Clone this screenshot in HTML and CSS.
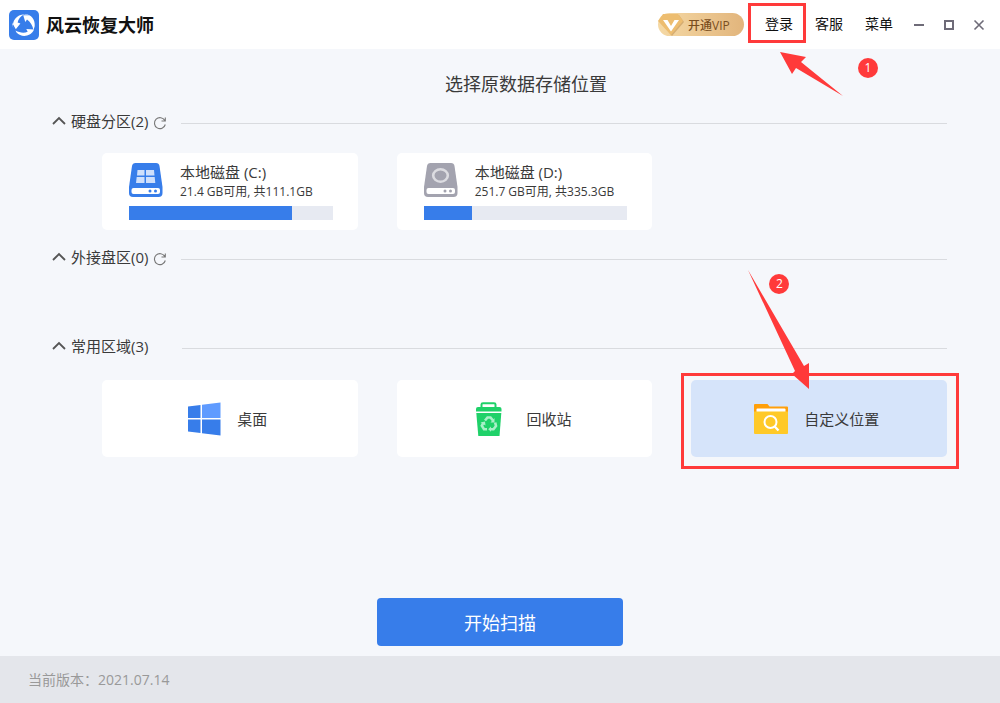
FILE: index.html
```html
<!DOCTYPE html>
<html lang="zh-CN">
<head>
<meta charset="utf-8">
<meta name="viewport" content="width=device-width, initial-scale=1">
<title>风云恢复大师</title>
<link rel="stylesheet" href="styles.css">
</head>
<body>
<header class="topbar">
  <svg class="logo" viewBox="0 0 30 30" aria-hidden="true">
    <rect width="30" height="30" rx="5" fill="#377dea"/>
    <g fill="#fff">
      <path d="M4.300 18.500C2.500 11 7.500 4.600 15.500 4.200C11.500 6 9.300 8.800 8.600 12.600L11.400 13.600L6.800 19.200L3 12.500Z"/>
      <path d="M15 4.500C21 3.300 26.500 9 25.700 16.200L24.500 20C23.500 15.500 21.500 12 18 9.500L16.300 12L14.200 5.300L21.500 5.200Z"/>
      <path d="M24.500 20.500C21.500 26.500 12.500 28 7.500 22.500L6.500 20.500C10.500 22.800 15 23.300 18.700 21.800L17.300 19L25 19.600L22 26.200Z"/>
    </g>
  </svg>
  <h1 class="brand">风云恢复大师</h1>
  <button class="vip" type="button">
    <svg class="vip-gem" viewBox="0 0 26 24" aria-hidden="true">
      <path d="M6 1H20L25 8L13 22L1 8Z" fill="#b98a4c" opacity=".5" transform="translate(1 1)"/>
      <path d="M5 1H20L25 8L13 22L0 8Z" fill="#edbd70"/>
      <path d="M5 7H9.500L13 13L16.500 7H21L13 18.500Z" fill="#fff"/>
    </svg>
    开通VIP
  </button>
  <div class="login">
    <button class="nav-item" type="button">登录</button>
    <span class="login-frame"></span>
    <svg class="login-arrow" viewBox="0 0 64 45" aria-hidden="true"><path d="M0 0L26 5L21 10L63 44L16 16L12 22Z" fill="#ff3a3a"/></svg>
    <span class="step step-one">1</span>
  </div>
  <button class="nav-item" type="button">客服</button>
  <button class="nav-item" type="button">菜单</button>
  <div class="window-controls">
    <button class="win" type="button" aria-label="最小化"><svg viewBox="0 0 12 12"><path d="M1 6H11" stroke="#6e6b78" stroke-width="2"/></svg></button>
    <button class="win" type="button" aria-label="最大化"><svg viewBox="0 0 12 12"><rect x="2" y="2" width="8" height="8" fill="none" stroke="#6e6b78" stroke-width="2"/></svg></button>
    <button class="win" type="button" aria-label="关闭"><svg viewBox="0 0 12 12"><path d="M1.500 1.500L10.500 10.500M10.500 1.500L1.500 10.500" stroke="#6e6b78" stroke-width="1.600"/></svg></button>
  </div>
</header>

<main class="content">
  <h2 class="title">选择原数据存储位置</h2>

  <section>
    <div class="section-head">
      <button class="toggle" type="button"><svg class="chevron" viewBox="0 0 14 10" aria-hidden="true"><path d="M1 8L7 2L13 8" fill="none" stroke="#555" stroke-width="1.800"/></svg>硬盘分区(2)</button>
      <button class="refresh" type="button" aria-label="刷新"><svg viewBox="0 0 14 14"><path d="M11.800 4.500A5.500 5.500 0 1 0 12.300 8.500M12.300 1.500V5H8.500" fill="none" stroke="#777" stroke-width="1.100"/></svg></button>
      <span class="rule"></span>
    </div>
    <div class="cards disks">
      <button class="card disk" type="button">
        <svg class="disk-icon" viewBox="0 0 34 34" aria-hidden="true">
          <path d="M6.500 0H27Q30 0 30.500 3L33.500 24V30Q33.500 34 29.500 34H4Q0 34 0 30V24L3 3Q3.500 0 6.500 0Z" fill="#377dea"/>
          <path d="M8.500 7H15.500V12.500H8ZM17 7H25L25.500 12.500H17ZM7.700 14H15.500V20H7ZM17 14H25.700L26.300 20H17Z" fill="#cfdffb"/>
          <rect x="2.500" y="25" width="28.500" height="6" rx="2" fill="#fff"/>
          <circle cx="21" cy="28" r="1.500" fill="#377dea"/><circle cx="26.500" cy="28" r="1.500" fill="#377dea"/>
        </svg>
        <span class="disk-info"><span class="disk-name">本地磁盘 (C:)</span><span class="disk-size">21.4 GB可用, 共111.1GB</span></span>
        <span class="usage"><span class="used" style="width:80%"></span></span>
      </button>
      <button class="card disk" type="button">
        <svg class="disk-icon" viewBox="0 0 34 34" aria-hidden="true">
          <path d="M6.500 0H27Q30 0 30.500 3L33.500 24V30Q33.500 34 29.500 34H4Q0 34 0 30V24L3 3Q3.500 0 6.500 0Z" fill="#a3a3af"/>
          <ellipse cx="16.500" cy="12.500" rx="7.300" ry="6.200" fill="none" stroke="#dcdce1" stroke-width="2.600"/>
          <rect x="2.500" y="25" width="28.500" height="6" rx="2" fill="#fff"/>
          <circle cx="21" cy="28" r="1.500" fill="#a3a3af"/><circle cx="26.500" cy="28" r="1.500" fill="#a3a3af"/>
        </svg>
        <span class="disk-info"><span class="disk-name">本地磁盘 (D:)</span><span class="disk-size">251.7 GB可用, 共335.3GB</span></span>
        <span class="usage"><span class="used" style="width:23.600%"></span></span>
      </button>
    </div>
  </section>

  <section class="external">
    <div class="section-head">
      <button class="toggle" type="button"><svg class="chevron" viewBox="0 0 14 10" aria-hidden="true"><path d="M1 8L7 2L13 8" fill="none" stroke="#555" stroke-width="1.800"/></svg>外接盘区(0)</button>
      <button class="refresh" type="button" aria-label="刷新"><svg viewBox="0 0 14 14"><path d="M11.800 4.500A5.500 5.500 0 1 0 12.300 8.500M12.300 1.500V5H8.500" fill="none" stroke="#777" stroke-width="1.100"/></svg></button>
      <span class="rule"></span>
    </div>
  </section>

  <section>
    <div class="section-head">
      <button class="toggle" type="button"><svg class="chevron" viewBox="0 0 14 10" aria-hidden="true"><path d="M1 8L7 2L13 8" fill="none" stroke="#555" stroke-width="1.800"/></svg>常用区域(3)</button>
      <span class="rule rule-wide"></span>
    </div>
    <div class="cards">
      <button class="card place" type="button">
        <svg class="place-icon" viewBox="0 0 34 34" aria-hidden="true">
          <path d="M1 4.500L13.500 3V16H1ZM1 17.500H13.500V31L1 29.500ZM15 17.500H33.500V33.500L15 31.200Z" fill="#377dea"/>
          <path d="M15 2.800L33.500 .5V16H15Z" fill="#5f9bff"/>
        </svg>
        桌面
      </button>
      <button class="card place place-bin" type="button">
        <svg class="place-icon" viewBox="0 0 34 34" aria-hidden="true">
          <path d="M9.500 5V2.500Q9.500 1.200 11 1.200H22Q23.500 1.200 23.500 2.500V5" fill="none" stroke="#1fd169" stroke-width="2"/>
          <path d="M4 9.500V7Q4 5 6 5H27.500Q29.500 5 29.500 7V9.500Z" fill="#1fd169"/>
          <path d="M4.300 11H29.300L27.500 34H6.300Z" fill="#1fd169"/>
          <g fill="none" stroke="#a9f0c8" stroke-width="2.600">
            <path d="M13 18.500L15.500 15.500H18.500L21 18.500"/>
            <path d="M23.200 20.500L24 24L21.500 27.200H18.500"/>
            <path d="M15 27.200H12L9.800 23.800L11.500 20.500"/>
          </g>
          <path d="M22.500 16V20.500H18.500ZM19 24.500V29.700L16.200 27.200ZM8.500 20.500L13 19.500L13.500 23.500Z" fill="#a9f0c8"/>
        </svg>
        回收站
      </button>
      <div class="custom">
        <button class="card place selected" type="button">
          <svg class="place-icon" viewBox="0 0 34 34" aria-hidden="true">
            <path d="M0 3Q0 2 1 2H13.500L15.500 4.500H33Q34 4.500 34 5.500V14H0Z" fill="#ff9f0a"/>
            <rect x="2.500" y="6.500" width="29" height="5" rx="1" fill="#fff"/>
            <path d="M0 9.500H34V31Q34 32 33 32H1Q0 32 0 31Z" fill="#ffc928"/>
            <circle cx="16.500" cy="20" r="6" fill="none" stroke="#fff" stroke-width="2"/>
            <path d="M20.700 24.500L24.500 28.500" stroke="#fff" stroke-width="2.400"/>
          </svg>
          自定义位置
        </button>
        <span class="custom-frame"></span>
        <svg class="custom-arrow" viewBox="0 0 62 119" aria-hidden="true"><path d="M0 0L56 96L61 93V119L44 104L47 101Z" fill="#ff3a3a"/></svg>
        <span class="step step-two">2</span>
      </div>
    </div>
  </section>
</main>

<div class="actions"><button class="scan" type="button">开始扫描</button></div>
<footer class="footer">当前版本：2021.07.14</footer>
</body>
</html>
```
FILE: styles.css
```css
* { box-sizing: border-box; }

body {
  margin: 0;
  min-height: 100vh;
  display: flex;
  flex-direction: column;
  background: #f5f7fb;
  color: #3a3a3a;
  font-family: "Open Sans", "Noto Sans CJK SC", sans-serif;
  font-size: 15px;
}

button {
  margin: 0;
  padding: 0;
  border: 0;
  background: none;
  color: inherit;
  font: inherit;
  cursor: pointer;
}

svg { display: block; flex: none; }

.topbar {
  display: flex;
  align-items: center;
  height: 49px;
  padding: 0 15px 0 9px;
  background: #fff;
  color: #111;
}

.logo { width: 30px; height: 30px; margin-right: 7px; }

.brand {
  margin: 0 auto 0 0;
  font-size: 18px;
  line-height: 24px;
  font-weight: 700;
}

.vip {
  display: flex;
  align-items: center;
  gap: 4px;
  width: 86px;
  height: 23px;
  margin-right: 21px;
  border-radius: 12px;
  background: linear-gradient(90deg, #f5d9a5, #e2b57c);
  color: #7a4e1e;
  font-size: 12px;
  font-weight: 500;
  white-space: nowrap;
}

.vip-gem { width: 26px; height: 24px; }

.login { position: relative; }

.nav-item {
  display: block;
  margin-right: 22px;
  padding-bottom: 2px;
  font-size: 14px;
  line-height: 20px;
}

.login-frame {
  position: absolute;
  left: -17px;
  top: -11px;
  width: 58px;
  height: 40px;
  border: 3px solid #ff3a3a;
  pointer-events: none;
}

.login-arrow {
  position: absolute;
  left: 15px;
  top: 38px;
  width: 64px;
  height: 45px;
}

.step {
  position: absolute;
  width: 20px;
  height: 20px;
  border-radius: 50%;
  background: #ff3a3a;
  color: #fff;
  font-size: 12px;
  line-height: 20px;
  text-align: center;
}

.step-one { left: 93px; top: 44px; }

.window-controls { display: flex; gap: 18px; margin-left: -2px; }
.win svg { width: 12px; height: 12px; }

.content {
  flex: 1;
  padding: 20px 53px 20px 52px;
}

.title {
  margin: 0 0 11px;
  padding-left: 53px;
  font-size: 18px;
  line-height: 30px;
  font-weight: 400;
  text-align: center;
}

.section-head {
  display: flex;
  align-items: center;
  height: 24px;
}

.toggle {
  display: flex;
  align-items: center;
  gap: 5px;
  padding-bottom: 2px;
  line-height: 22px;
}

.chevron { width: 14px; height: 10px; }
.refresh { margin: 2px 0 0 5px; }
.refresh svg { width: 14px; height: 14px; }

.rule {
  flex: 1;
  height: 1px;
  margin: 2px 0 0 14px;
  background: #d9dbdf;
}

.rule-wide { margin-left: 34px; }

.cards {
  display: grid;
  grid-template-columns: repeat(3, 1fr);
  gap: 39px;
  padding-left: 50px;
  margin-top: 21px;
}

.disks { margin-top: 19px; }
.external { margin: 16px 0 65px; }

.card {
  width: 100%;
  min-height: 77px;
  border-radius: 5px;
  background: #fff;
}

.disk {
  display: grid;
  grid-template-columns: 34px 1fr;
  column-gap: 17px;
  row-gap: 5px;
  padding: 9px 25px 10px 27px;
  text-align: left;
}

.disk-icon { width: 34px; height: 34px; margin-top: 1px; }
.disk-info { display: grid; grid-template-rows: 20px 19px; }
.disk-name { line-height: 20px; }
.disk-size { font-size: 12px; line-height: 19px; white-space: nowrap; }

.usage {
  grid-column: 1 / -1;
  height: 14px;
  background: #e7eaf2;
}

.used { display: block; height: 100%; background: #377dea; }

.place {
  display: flex;
  align-items: center;
  justify-content: center;
  gap: 16px;
  padding-right: 5px;
}

.place-bin { gap: 20px; }
.place-icon { width: 34px; height: 34px; }
.selected { background: #d6e4fa; }

.custom { position: relative; }

.custom-frame {
  position: absolute;
  inset: -7px -12px -12px -10px;
  border: 3px solid #ff3a3a;
  pointer-events: none;
}

.custom-arrow {
  position: absolute;
  left: 57px;
  top: -110px;
  width: 62px;
  height: 119px;
  pointer-events: none;
}

.step-two { left: 78px; top: -106px; }

.actions {
  display: flex;
  justify-content: center;
  padding-bottom: 10px;
}

.scan {
  width: 246px;
  height: 48px;
  border-radius: 4px;
  background: #377dea;
  color: #fff;
  font-size: 18px;
}

.footer {
  padding: 12px 28px 11px;
  background: #e4e6eb;
  color: #999;
  font-size: 14px;
  line-height: 24px;
}
```
